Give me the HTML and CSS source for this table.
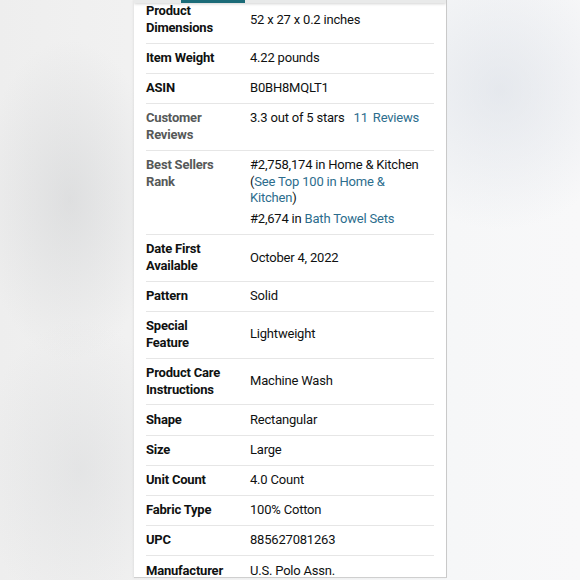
FILE: index.html
```html
<!DOCTYPE html>
<html>
<head>
<meta charset="utf-8">
<link rel="stylesheet" href="styles.css">
</head>
<body>
<main class="panel">
  <div class="tabbar"><span class="tab-indicator"></span></div>
  <div class="details">
    <div class="row mid"><div class="label">Product Dimensions</div><div class="value">52 x 27 x 0.2 inches</div></div>
    <div class="row mid"><div class="label">Item Weight</div><div class="value">4.22 pounds</div></div>
    <div class="row mid"><div class="label">ASIN</div><div class="value">B0BH8MQLT1</div></div>
    <div class="row"><div class="label muted">Customer Reviews</div><div class="value">3.3 out of 5 stars <a class="link gap">11</a> <a class="link">Reviews</a></div></div>
    <div class="row"><div class="label muted">Best Sellers Rank</div><div class="value"><p class="rank">#2,758,174 in Home &amp; Kitchen (<a class="link">See Top 100 in Home &amp; Kitchen</a>)</p><p class="rank sub">#2,674 in <a class="link">Bath Towel Sets</a></p></div></div>
    <div class="row mid"><div class="label">Date First Available</div><div class="value">October 4, 2022</div></div>
    <div class="row mid"><div class="label">Pattern</div><div class="value">Solid</div></div>
    <div class="row mid"><div class="label">Special Feature</div><div class="value">Lightweight</div></div>
    <div class="row mid"><div class="label">Product Care Instructions</div><div class="value">Machine Wash</div></div>
    <div class="row mid"><div class="label">Shape</div><div class="value">Rectangular</div></div>
    <div class="row mid"><div class="label">Size</div><div class="value">Large</div></div>
    <div class="row mid"><div class="label">Unit Count</div><div class="value">4.0 Count</div></div>
    <div class="row mid"><div class="label">Fabric Type</div><div class="value">100% Cotton</div></div>
    <div class="row mid"><div class="label">UPC</div><div class="value">885627081263</div></div>
    <div class="row mid"><div class="label">Manufacturer</div><div class="value">U.S. Polo Assn.</div></div>
  </div>
</main>
</body>
</html>
```
FILE: styles.css
```css
html, body {
  margin: 0;
  padding: 0;
  width: 580px;
  height: 580px;
  overflow: hidden;
}
body {
  font-family: Roboto, "Liberation Sans", sans-serif;
  color: #0f1111;
  background:
    radial-gradient(ellipse 90px 160px at 70px 200px, rgba(200,202,204,0.45), rgba(200,202,204,0) 100%),
    radial-gradient(ellipse 100px 150px at 80px 470px, rgba(205,207,209,0.35), rgba(205,207,209,0) 100%),
    radial-gradient(ellipse 130px 140px at 500px 90px, rgba(215,220,228,0.55), rgba(215,220,228,0) 100%),
    linear-gradient(90deg, #eeeeee 0%, #f1f1f1 22%, #f6f7f8 78%, #f8f8f9 100%);
  display: flex;
  justify-content: center;
  align-items: flex-start;
}
.panel {
  position: relative;
  width: 312px;
  height: 577px;
  background: #ffffff;
  border-right: 1px solid #c9c9c9;
  border-bottom: 1px solid #cfcfcf;
  box-shadow: -1px 0 2px rgba(0,0,0,0.06);
  overflow: hidden;
  margin-left: 1px;
}
.tabbar {
  position: absolute;
  top: 0;
  left: 0;
  right: 0;
  height: 3px;
  background: #e9eaea;
  box-shadow: 0 1px 3px rgba(0,0,0,0.18);
  z-index: 2;
}
.tab-indicator {
  position: absolute;
  left: 47px;
  width: 64px;
  top: 0;
  height: 3px;
  background: #1b6b78;
}
.details {
  margin-top: -3px;
  padding: 0 12px;
}
.row {
  display: grid;
  grid-template-columns: 104px 1fr;
  border-bottom: 1px solid #e6e6e6;
  padding: 6.3px 0;
  font-size: 13px;
  line-height: 16.6px;
  letter-spacing: -0.2px;
}
.row.mid {
  align-items: center;
}
.label {
  font-weight: 700;
  max-width: 82px;
  color: #0f1111;
}
.label.muted {
  color: #565959;
}
.value {
  color: #0f1111;
}
.link {
  color: #2c6d8d;
}
.gap {
  margin-left: 6px;
  margin-right: 2px;
}
.rank {
  margin: 0;
}
.rank.sub {
  margin-top: 4px;
}
```
